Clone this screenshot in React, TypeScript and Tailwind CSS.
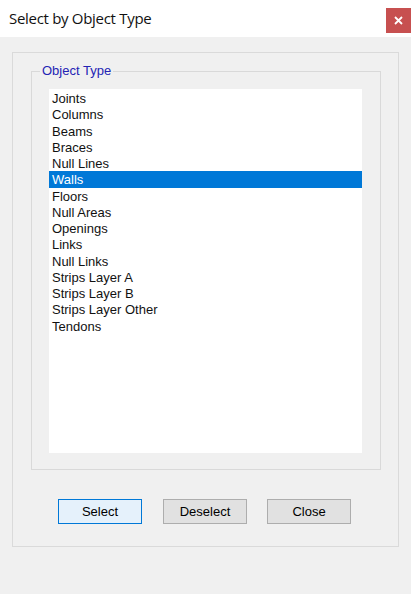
import { useState } from "react";

const objectTypes = [
  "Joints",
  "Columns",
  "Beams",
  "Braces",
  "Null Lines",
  "Walls",
  "Floors",
  "Null Areas",
  "Openings",
  "Links",
  "Null Links",
  "Strips Layer A",
  "Strips Layer B",
  "Strips Layer Other",
  "Tendons",
];

const sans = "font-['Liberation_Sans',Arial,sans-serif]";

export default function App() {
  const [selected, setSelected] = useState("Walls");

  return (
    <div className={`w-[411px] h-[594px] bg-[#f0f0f0] flex flex-col ${sans} text-[13px] text-black`}>
      {/* title bar */}
      <div className="h-[37px] bg-white flex justify-between shrink-0">
        <span className="pl-[9px] pt-[9px] text-[15px] leading-[18px] font-['Open_Sans',sans-serif] tracking-[-0.3px] text-[#111]">
          Select by Object Type
        </span>
        <button className="mt-[8px] w-[25px] h-[25px] bg-[#c75050] flex items-center justify-center">
          <svg width="9" height="9" viewBox="0 0 9 9">
            <path d="M1 1L8 8M8 1L1 8" stroke="white" strokeWidth="1.8" />
          </svg>
        </button>
      </div>

      {/* outer panel */}
      <div className="ml-[12px] mt-[15px] w-[387px] h-[495px] border border-[#dadada] flex flex-col">
        {/* group box */}
        <div className="relative ml-[18px] mt-[18px] w-[350px] h-[399px] border border-[#d9d9d9] shrink-0">
          <span className="absolute left-[8px] top-[-9px] px-[2px] bg-[#f0f0f0] text-[13px] leading-[16px] text-[#2424b4]">
            Object Type
          </span>
          <div className="ml-[17px] mt-[17px] w-[313px] h-[364px] bg-white pt-[1px]">
            {objectTypes.map((name) => (
              <div
                key={name}
                onClick={() => setSelected(name)}
                className={`h-[16.25px] leading-[18px] pl-[3px] cursor-default ${
                  selected === name ? "bg-[#0078d7] text-white" : "text-[#111]"
                }`}
              >
                {name}
              </div>
            ))}
          </div>
        </div>

        {/* buttons */}
        <div className="flex ml-[45px] mt-[29px] gap-[21px]">
          <button className="w-[84px] h-[25px] bg-[#e5f1fb] border border-[#0078d7] text-[13px]">Select</button>
          <button className="w-[84px] h-[25px] bg-[#e1e1e1] border border-[#adadad] text-[13px]">Deselect</button>
          <button className="w-[84px] h-[25px] bg-[#e1e1e1] border border-[#adadad] text-[13px] -ml-px">Close</button>
        </div>
      </div>
    </div>
  );
}
